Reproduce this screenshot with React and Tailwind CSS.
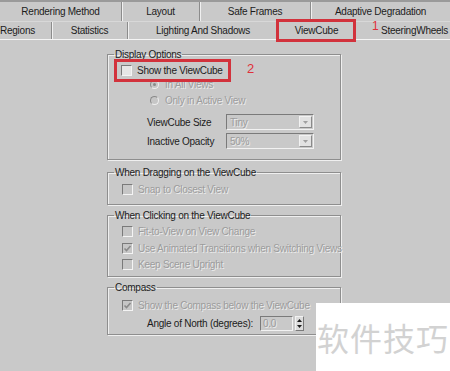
import React from 'react';

// ViewCube preferences panel (3ds Max style) with annotation marks

const font = "font-['Liberation_Sans',Arial,sans-serif]";
const txt = 'text-[10px] tracking-[-0.25px]';
const disabledText = 'text-[#9c9c9c] [text-shadow:1px_1px_0_#ececec]';

function Tab({ w, children, sep = true, align = 'center', selected }) {
  return (
    <div
      className={`relative flex h-full items-center ${align === 'left' ? 'justify-start' : 'justify-center'} ${w} ${
        sep ? 'border-r border-[#8c8c8c] shadow-[1px_0_0_#f0f0f0]' : ''
      }`}
    >
      <span className={`whitespace-nowrap ${txt} text-[#1c1c1c]`}>{children}</span>
      {selected && <div className="absolute -top-[3px] -bottom-[3px] left-[-2px] right-[-1px] border-[3px] border-[#d2323c]" />}
    </div>
  );
}

function CheckBox({ checked, enabled }) {
  return (
    <span
      className={`relative inline-flex h-[11px] w-[11px] shrink-0 items-center justify-center border border-t-[#7a7a7a] border-l-[#7a7a7a] border-b-[#f4f4f4] border-r-[#f4f4f4] ${
        enabled ? 'bg-[#e6e6e6]' : 'bg-[#c6c6c6]'
      }`}
    >
      {checked && (
        <svg width="9" height="9" viewBox="0 0 9 9">
          <path d="M1.5 4.5 L3.5 6.5 L7.5 2" fill="none" stroke="#8a8a8a" strokeWidth="1.6" />
        </svg>
      )}
    </span>
  );
}

function CheckRow({ label, checked, enabled, className = '' }) {
  return (
    <div className={`flex h-[16px] items-center gap-[5px] pl-[14px] ${className}`}>
      <CheckBox checked={checked} enabled={enabled} />
      <span className={`whitespace-nowrap ${txt} ${enabled ? 'text-[#1c1c1c]' : disabledText}`}>{label}</span>
    </div>
  );
}

function Radio({ checked }) {
  return (
    <span className="inline-flex h-[9px] w-[9px] shrink-0 items-center justify-center rounded-full border border-t-[#8a8a8a] border-l-[#8a8a8a] border-b-[#f0f0f0] border-r-[#f0f0f0] bg-[#c6c6c6]">
      {checked && <span className="h-[3px] w-[3px] rounded-full bg-[#8a8a8a]" />}
    </span>
  );
}

function Dropdown({ value }) {
  return (
    <div className="flex h-[16px] w-[88px] items-center border border-t-[#7a7a7a] border-l-[#7a7a7a] border-b-[#f2f2f2] border-r-[#f2f2f2] bg-[#c9c9c9]">
      <span className={`flex-1 pl-[3px] ${txt} ${disabledText}`}>{value}</span>
      <span className="mr-[1px] flex h-[12px] w-[13px] items-center justify-center border border-t-[#f2f2f2] border-l-[#f2f2f2] border-b-[#8a8a8a] border-r-[#8a8a8a] bg-[#e2e2e2]">
        <svg width="5" height="3" viewBox="0 0 5 3">
          <path d="M0 0 H5 L2.5 3 Z" fill="#a0a0a0" />
        </svg>
      </span>
    </div>
  );
}

function Group({ title, className = '', children }) {
  return (
    <fieldset
      className={`block w-[234px] min-w-0 border border-[#8e8e8e] shadow-[inset_1px_1px_0_#efefef,1px_1px_0_#efefef] ${className}`}
    >
      <legend className={`ml-[6px] px-[1px] ${txt} leading-[13px] text-[#1c1c1c]`}>{title}</legend>
      {children}
    </fieldset>
  );
}

export default function App() {
  return (
    <div className={`relative h-[371px] w-[450px] overflow-hidden bg-[#c9c9c9] ${font}`}>
      {/* --- Tab rows --- */}
      <div className="border-t-2 border-[#9a9a9a]">
        <div className="flex h-[20px] border-b border-[#d8d8d8]">
          <Tab w="w-[122px]">Rendering Method</Tab>
          <Tab w="w-[78px]">Layout</Tab>
          <Tab w="w-[111px]">Safe Frames</Tab>
          <Tab w="w-[139px]" sep={false}>Adaptive Degradation</Tab>
        </div>
        <div className="flex h-[18px] border-b border-[#f4f4f4]">
          <Tab w="w-[52px]" align="left">Regions</Tab>
          <Tab w="w-[76px]">Statistics</Tab>
          <Tab w="w-[150px]" sep={false}>Lighting And Shadows</Tab>
          <Tab w="w-[77px]" sep={false} selected>ViewCube</Tab>
          <div className="flex h-full flex-1 items-center pl-[26px]">
            <span className={`relative whitespace-nowrap ${txt} text-[#1c1c1c]`}>
              <span className="absolute -left-[9px] -top-[6px] text-[12px] text-[#e0303a]">1</span>
              SteeringWheels
            </span>
          </div>
        </div>
      </div>

      {/* --- Body --- */}
      <div className="pl-[107px] pt-[8px]">
        <Group title="Display Options" className="h-[112px]">
          <div className="relative ml-[9px] mt-[1px] flex h-[17px] w-[111px] items-center gap-[5px] pl-[4px] outline-[3px] outline-[#d2323c] outline">
            <CheckBox enabled />
            <span className={`whitespace-nowrap ${txt} text-[#1c1c1c]`}>Show the ViewCube</span>
            <span className="absolute left-[130px] -top-[3px] text-[13px] text-[#e0303a]">2</span>
          </div>
          <div className="-mt-[2px] flex h-[14px] items-center gap-[6px] pl-[42px]">
            <Radio checked />
            <span className={`${txt} ${disabledText}`}>In All Views</span>
          </div>
          <div className="mt-[2px] flex h-[14px] items-center gap-[6px] pl-[42px]">
            <Radio />
            <span className={`${txt} ${disabledText}`}>Only in Active View</span>
          </div>
          <div className="mt-[7px] flex h-[16px] items-center pl-[39px]">
            <span className={`w-[79px] ${txt} text-[#1c1c1c]`}>ViewCube Size</span>
            <Dropdown value="Tiny" />
          </div>
          <div className="mt-[3px] flex h-[16px] items-center pl-[39px]">
            <span className={`w-[79px] ${txt} text-[#1c1c1c]`}>Inactive Opacity</span>
            <Dropdown value="50%" />
          </div>
        </Group>

        <Group title="When Dragging on the ViewCube" className="mt-[6px] h-[39px]">
          <CheckRow label="Snap to Closest View" className="mt-[2px]" />
        </Group>

        <Group title="When Clicking on the ViewCube" className="mt-[4px] h-[68px]">
          <CheckRow label="Fit-to-View on View Change" className="mt-[1px]" />
          <CheckRow label="Use Animated Transitions when Switching Views" checked className="mt-[1px]" />
          <CheckRow label="Keep Scene Upright" className="mt-[0px]" />
        </Group>

        <Group title="Compass" className="mt-[4px] h-[54px]">
          <CheckRow label="Show the Compass below the ViewCube" checked className="mt-[3px]" />
          <div className="mt-[2px] flex h-[16px] items-center pl-[39px]">
            <span className={`w-[113px] whitespace-nowrap ${txt} text-[#1c1c1c]`}>Angle of North (degrees):</span>
            <div className="flex h-[15px] w-[33px] items-center border border-t-[#7a7a7a] border-l-[#7a7a7a] border-b-[#f2f2f2] border-r-[#f2f2f2] bg-[#c9c9c9] pl-[2px]">
              <span className={`${txt} ${disabledText}`}>0.0</span>
            </div>
            <div className="ml-[2px] flex h-[15px] w-[9px] flex-col border border-t-[#f2f2f2] border-l-[#f2f2f2] border-b-[#7a7a7a] border-r-[#7a7a7a] bg-[#dcdcdc]">
              <svg width="7" height="13" viewBox="0 0 7 13">
                <path d="M1 5 L3.5 2 L6 5 Z" fill="#1c1c1c" />
                <path d="M1 8 L3.5 11 L6 8 Z" fill="#1c1c1c" />
              </svg>
            </div>
          </div>
        </Group>
      </div>

      {/* --- Watermark overlay --- */}
      <div className="absolute bottom-0 left-[316px] flex h-[68px] w-[134px] items-center justify-center bg-white">
        <span className="whitespace-nowrap text-[32px] tracking-[1px] text-[#d2d2d2] font-['Noto_Sans_CJK_SC',sans-serif]">
          软件技巧
        </span>
      </div>
    </div>
  );
}
